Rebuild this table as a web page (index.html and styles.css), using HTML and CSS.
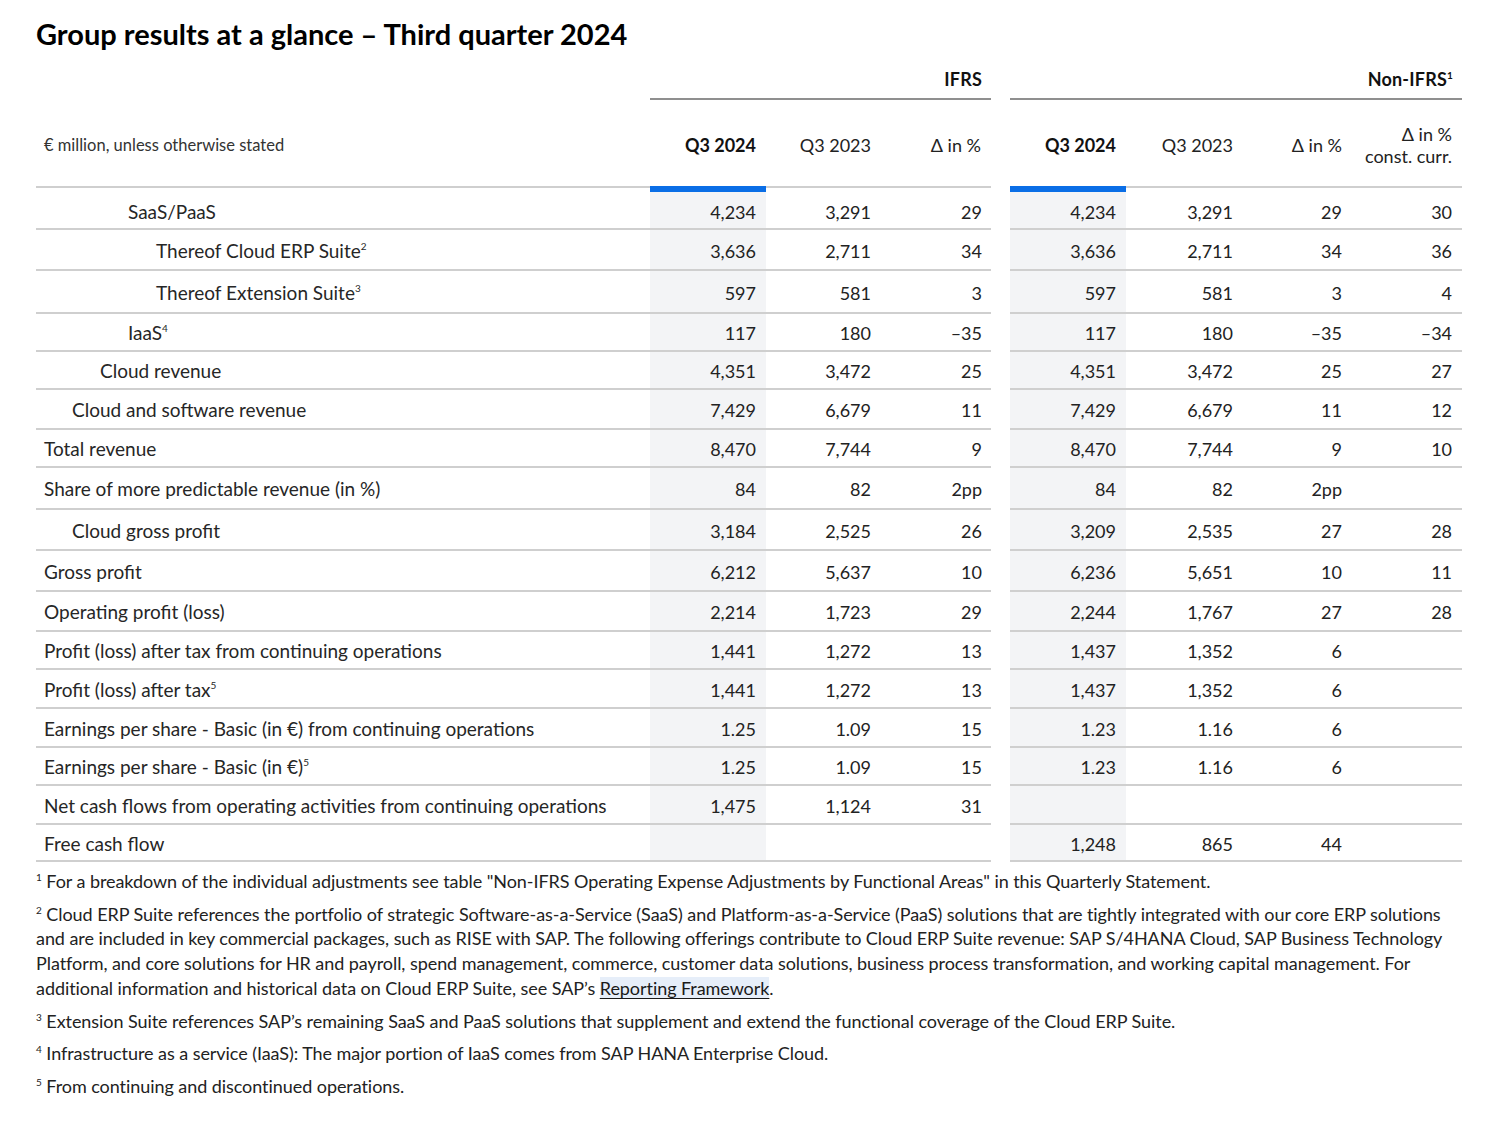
FILE: index.html
```html
<!DOCTYPE html>
<html lang="en">
<head>
<meta charset="utf-8">
<title>Group results at a glance – Third quarter 2024</title>
<link rel="stylesheet" href="styles.css">
</head>
<body>
<div class="page">
  <h1 class="title">Group results at a glance – Third quarter 2024</h1>
  <table class="results">
    <colgroup>
      <col class="c-label"><col class="c-a"><col class="c-b"><col class="c-c">
      <col class="c-gap">
      <col class="c-a"><col class="c-b2"><col class="c-c2"><col class="c-d">
    </colgroup>
    <thead>
      <tr class="grp">
        <th class="blank"></th>
        <th class="grp-h" colspan="3">IFRS</th>
        <th class="gap"></th>
        <th class="grp-h" colspan="4">Non-IFRS<sup>1</sup></th>
      </tr>
      <tr class="colh">
        <th class="unit">€ million, unless otherwise stated</th>
        <th class="num cur">Q3 2024</th>
        <th class="num">Q3 2023</th>
        <th class="num">Δ in %</th>
        <th class="gap"></th>
        <th class="num cur">Q3 2024</th>
        <th class="num">Q3 2023</th>
        <th class="num">Δ in %</th>
        <th class="num">Δ in %<br>const. curr.</th>
      </tr>
    </thead>
    <tbody>
      <tr class="h42 first">
        <td class="lbl l3">SaaS/PaaS</td><td class="num cur">4,234</td><td class="num">3,291</td><td class="num">29</td><td class="gap"></td><td class="num cur">4,234</td><td class="num">3,291</td><td class="num">29</td><td class="num">30</td>
      </tr>
      <tr class="h41">
        <td class="lbl l4">Thereof Cloud ERP Suite<sup>2</sup></td><td class="num cur">3,636</td><td class="num">2,711</td><td class="num">34</td><td class="gap"></td><td class="num cur">3,636</td><td class="num">2,711</td><td class="num">34</td><td class="num">36</td>
      </tr>
      <tr class="h43">
        <td class="lbl l4">Thereof Extension Suite<sup>3</sup></td><td class="num cur">597</td><td class="num">581</td><td class="num">3</td><td class="gap"></td><td class="num cur">597</td><td class="num">581</td><td class="num">3</td><td class="num">4</td>
      </tr>
      <tr class="h38">
        <td class="lbl l3">IaaS<sup>4</sup></td><td class="num cur">117</td><td class="num">180</td><td class="num">–35</td><td class="gap"></td><td class="num cur">117</td><td class="num">180</td><td class="num">–35</td><td class="num">–34</td>
      </tr>
      <tr class="h38">
        <td class="lbl l2">Cloud revenue</td><td class="num cur">4,351</td><td class="num">3,472</td><td class="num">25</td><td class="gap"></td><td class="num cur">4,351</td><td class="num">3,472</td><td class="num">25</td><td class="num">27</td>
      </tr>
      <tr class="h40">
        <td class="lbl l1">Cloud and software revenue</td><td class="num cur">7,429</td><td class="num">6,679</td><td class="num">11</td><td class="gap"></td><td class="num cur">7,429</td><td class="num">6,679</td><td class="num">11</td><td class="num">12</td>
      </tr>
      <tr class="h38">
        <td class="lbl">Total revenue</td><td class="num cur">8,470</td><td class="num">7,744</td><td class="num">9</td><td class="gap"></td><td class="num cur">8,470</td><td class="num">7,744</td><td class="num">9</td><td class="num">10</td>
      </tr>
      <tr class="h42">
        <td class="lbl">Share of more predictable revenue (in %)</td><td class="num cur">84</td><td class="num">82</td><td class="num">2pp</td><td class="gap"></td><td class="num cur">84</td><td class="num">82</td><td class="num">2pp</td><td class="num"></td>
      </tr>
      <tr class="h41">
        <td class="lbl l1">Cloud gross profit</td><td class="num cur">3,184</td><td class="num">2,525</td><td class="num">26</td><td class="gap"></td><td class="num cur">3,209</td><td class="num">2,535</td><td class="num">27</td><td class="num">28</td>
      </tr>
      <tr class="h41">
        <td class="lbl">Gross profit</td><td class="num cur">6,212</td><td class="num">5,637</td><td class="num">10</td><td class="gap"></td><td class="num cur">6,236</td><td class="num">5,651</td><td class="num">10</td><td class="num">11</td>
      </tr>
      <tr class="h40">
        <td class="lbl">Operating profit (loss)</td><td class="num cur">2,214</td><td class="num">1,723</td><td class="num">29</td><td class="gap"></td><td class="num cur">2,244</td><td class="num">1,767</td><td class="num">27</td><td class="num">28</td>
      </tr>
      <tr class="h38">
        <td class="lbl">Profit (loss) after tax from continuing operations</td><td class="num cur">1,441</td><td class="num">1,272</td><td class="num">13</td><td class="gap"></td><td class="num cur">1,437</td><td class="num">1,352</td><td class="num">6</td><td class="num"></td>
      </tr>
      <tr class="h39">
        <td class="lbl">Profit (loss) after tax<sup>5</sup></td><td class="num cur">1,441</td><td class="num">1,272</td><td class="num">13</td><td class="gap"></td><td class="num cur">1,437</td><td class="num">1,352</td><td class="num">6</td><td class="num"></td>
      </tr>
      <tr class="h39">
        <td class="lbl">Earnings per share - Basic (in €) from continuing operations</td><td class="num cur">1.25</td><td class="num">1.09</td><td class="num">15</td><td class="gap"></td><td class="num cur">1.23</td><td class="num">1.16</td><td class="num">6</td><td class="num"></td>
      </tr>
      <tr class="h38">
        <td class="lbl">Earnings per share - Basic (in €)<sup>5</sup></td><td class="num cur">1.25</td><td class="num">1.09</td><td class="num">15</td><td class="gap"></td><td class="num cur">1.23</td><td class="num">1.16</td><td class="num">6</td><td class="num"></td>
      </tr>
      <tr class="h39">
        <td class="lbl">Net cash flows from operating activities from continuing operations</td><td class="num cur">1,475</td><td class="num">1,124</td><td class="num">31</td><td class="gap"></td><td class="num cur"></td><td class="num"></td><td class="num"></td><td class="num"></td>
      </tr>
      <tr class="h37">
        <td class="lbl">Free cash flow</td><td class="num cur"></td><td class="num"></td><td class="num"></td><td class="gap"></td><td class="num cur">1,248</td><td class="num">865</td><td class="num">44</td><td class="num"></td>
      </tr>
    </tbody>
  </table>
  <div class="notes">
    <p><sup>1</sup> For a breakdown of the individual adjustments see table "Non-IFRS Operating Expense Adjustments by Functional Areas" in this Quarterly Statement.</p>
    <p><sup>2</sup> Cloud ERP Suite references the portfolio of strategic Software-as-a-Service (SaaS) and Platform-as-a-Service (PaaS) solutions that are tightly integrated with our core ERP solutions and are included in key commercial packages, such as RISE with SAP. The following offerings contribute to Cloud ERP Suite revenue: SAP S/4HANA Cloud, SAP Business Technology Platform, and core solutions for HR and payroll, spend management, commerce, customer data solutions, business process transformation, and working capital management. For additional information and historical data on Cloud ERP Suite, see SAP’s <a class="link" href="#">Reporting Framework</a>.</p>
    <p><sup>3</sup> Extension Suite references SAP’s remaining SaaS and PaaS solutions that supplement and extend the functional coverage of the Cloud ERP Suite.</p>
    <p><sup>4</sup> Infrastructure as a service (IaaS): The major portion of IaaS comes from SAP HANA Enterprise Cloud.</p>
    <p><sup>5</sup> From continuing and discontinued operations.</p>
  </div>
</div>
</body>
</html>
```

FILE: styles.css
```css
* { box-sizing: border-box; }

html, body {
  margin: 0;
  padding: 0;
  background: #ffffff;
}

body {
  font-family: Lato, "Open Sans", Arial, sans-serif;
  color: #222222;
}

.page {
  width: 1500px;
  padding: 0 38px 0 36px;
}

.title {
  margin: 0;
  padding-top: 16px;
  height: 52px;
  font-size: 29px;
  line-height: 36px;
  font-weight: 700;
  color: #000000;
  letter-spacing: 0;
}

.results {
  width: 1426px;
  border-collapse: separate;
  border-spacing: 0;
  table-layout: fixed;
  font-size: 18px;
}

.c-label { width: 614px; }
.c-a { width: 116px; }
.c-b { width: 115px; }
.c-c { width: 110px; }
.c-gap { width: 19px; }
.c-b2 { width: 117px; }
.c-c2 { width: 109px; }
.c-d { width: 110px; }

.results th,
.results td {
  padding: 0;
}

/* group header row */
.grp { height: 48px; }
.grp th {
  vertical-align: bottom;
}
.grp-h {
  text-align: right;
  font-size: 18px;
  font-weight: 700;
  color: #111111;
  letter-spacing: 0.2px;
  padding: 0 9px 9px 0 !important;
  border-bottom: 2px solid #8f8f8f;
  line-height: 20px;
}
.grp-h sup {
  font-size: 10px;
  position: relative;
  top: -7px;
  vertical-align: baseline;
  line-height: 0;
}

/* column header row */
.colh { height: 88px; }
.colh th {
  font-weight: 400;
  border-bottom: 2px solid #cfcfcf;
  vertical-align: middle;
  line-height: 22px;
  padding-top: 3px !important;
  color: #222222;
}
.colh .unit {
  text-align: left;
  font-size: 16.5px;
  padding-left: 8px !important;
  color: #333333;
  letter-spacing: 0;
}
.colh th.cur {
  font-weight: 700;
  color: #111111;
  border-bottom-color: #0a6ee6;
}
.colh th.gap { border-bottom: 0; }

/* body rows */
.results tbody td {
  border-bottom: 2px solid #cfcfcf;
  vertical-align: middle;
  line-height: 22px;
  padding-top: 2px;
}
.results tbody td.gap {
  border-bottom: 0;
}
.results .cur {
  background: #f3f4f6;
}
.results thead .cur { background: transparent; }

.results tbody .first td {
  padding-top: 8px;
}
.first td.cur {
  box-shadow: inset 0 4px 0 #0a6ee6;
}

.num {
  text-align: right;
  padding-right: 10px !important;
  white-space: nowrap;
}
.results td.num:nth-child(4) { padding-right: 9px !important; }

.lbl {
  font-size: 19px;
  padding-left: 8px !important;
  white-space: nowrap;
  color: #262626;
}
.l1 { padding-left: 36px !important; }
.l2 { padding-left: 64px !important; }
.l3 { padding-left: 92px !important; }
.l4 { padding-left: 120px !important; }

.lbl sup {
  font-size: 10px;
  position: relative;
  top: -8px;
  vertical-align: baseline;
  line-height: 0;
}

.h37 { height: 37px; }
.h38 { height: 38px; }
.h39 { height: 39px; }
.h40 { height: 40px; }
.h41 { height: 41px; }
.h42 { height: 42px; }
.h43 { height: 43px; }

/* footnotes */
.notes {
  width: 1426px;
  padding-top: 7px;
  font-size: 18px;
  line-height: 24.7px;
  color: #222222;
  letter-spacing: -0.06px;
}
.notes p {
  margin: 0 0 8px 0;
}
.notes sup {
  font-size: 10px;
  position: relative;
  top: -7px;
  vertical-align: baseline;
  line-height: 0;
}
.link {
  color: #1a1a1a;
  text-decoration: underline;
  text-underline-offset: 3px;
  background: #e6eef9;
}
```
